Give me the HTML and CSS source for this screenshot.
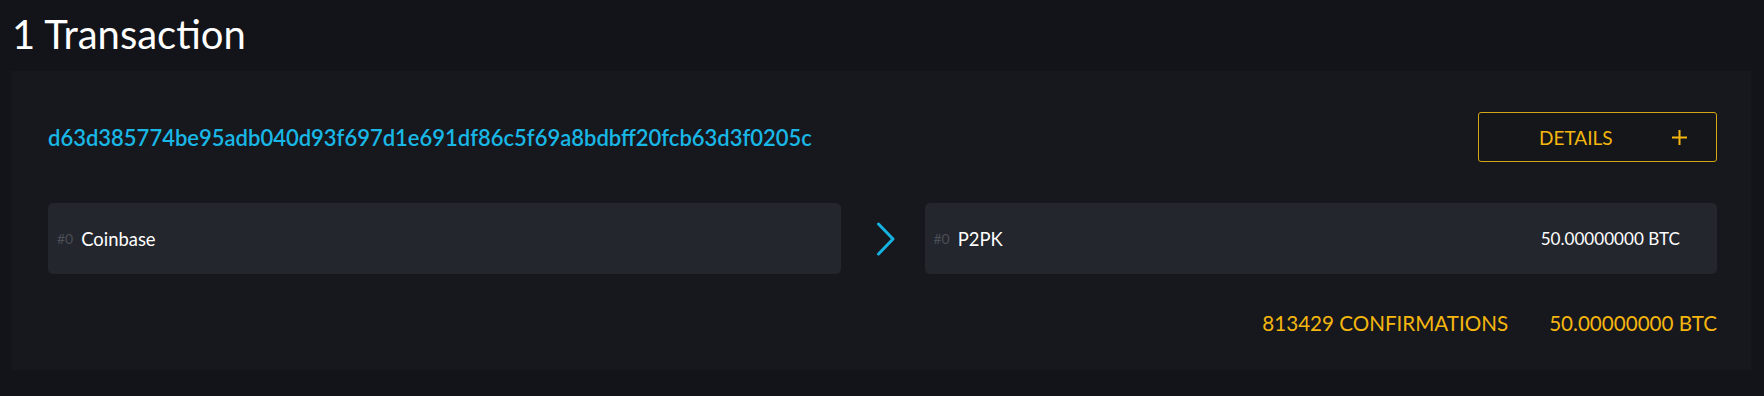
FILE: index.html
```html
<!DOCTYPE html>
<html lang="en">
<head>
<meta charset="utf-8">
<title>1 Transaction</title>
<link rel="stylesheet" href="styles.css">
</head>
<body>
<main class="page">
  <h1 class="title">1 Transaction</h1>
  <section class="card">
    <div class="tx-header">
      <a class="txid" href="#">d63d385774be95adb040d93f697d1e691df86c5f69a8bdbff20fcb63d3f0205c</a>
      <button class="details-btn" type="button">
        <span class="details-label">DETAILS</span>
        <svg class="plus" width="17" height="17" viewBox="0 0 17 17" aria-hidden="true"><path d="M8.5 1v15M1 8.5h15" stroke="#f5b60f" stroke-width="2" fill="none"/></svg>
      </button>
    </div>
    <div class="io-row">
      <div class="io-box">
        <span class="io-index">#0</span>
        <span class="io-label">Coinbase</span>
      </div>
      <div class="io-arrow">
        <svg width="20" height="34" viewBox="0 0 20 34" aria-hidden="true"><path d="M2.5 2 L17 17 L2.5 32" stroke="#16b3e2" stroke-width="3" stroke-linecap="round" stroke-linejoin="round" fill="none"/></svg>
      </div>
      <div class="io-box">
        <span class="io-index">#0</span>
        <span class="io-label">P2PK</span>
        <span class="io-amount">50.00000000 BTC</span>
      </div>
    </div>
    <div class="tx-footer">
      <span class="confirmations">813429 CONFIRMATIONS</span>
      <span class="total">50.00000000 BTC</span>
    </div>
  </section>
</main>
</body>
</html>
```

FILE: styles.css
```css
html, body {
  margin: 0;
  padding: 0;
  background: #121419;
}

body {
  font-family: Lato, "Noto Sans", sans-serif;
  color: #ffffff;
}

.page {
  padding: 10px 13px 0 11px;
}

.title {
  margin: 0 0 13px 1px;
  font-size: 40px;
  font-weight: 400;
  line-height: 48px;
  color: #ffffff;
}

.card {
  background: #16181d;
  height: 299px;
  box-sizing: border-box;
  padding: 41px 34px 0 37px;
}

.tx-header {
  display: flex;
  align-items: center;
  justify-content: space-between;
  height: 50px;
}

.txid {
  font-size: 22px;
  font-weight: 600;
  color: #19b7e6;
  text-decoration: none;
}

.details-btn {
  display: flex;
  align-items: center;
  height: 50px;
  width: 239px;
  box-sizing: border-box;
  padding: 0 28px 0 60px;
  background: #141619;
  border: 1px solid #d6a615;
  border-radius: 3px;
  font-family: inherit;
  cursor: pointer;
}

.details-label {
  font-size: 19px;
  color: #f5b60f;
}

.plus {
  margin-left: auto;
}

.io-row {
  display: grid;
  grid-template-columns: 1fr 84px 1fr;
  margin-top: 41px;
  height: 71px;
}

.io-box {
  display: flex;
  align-items: center;
  background: #23262d;
  border-radius: 5px;
  padding: 0 37px 0 9px;
}

.io-index {
  font-size: 14px;
  color: #4a4e57;
  margin-right: 8px;
}

.io-label {
  font-size: 18.4px;
  color: #ffffff;
}

.io-amount {
  margin-left: auto;
  font-size: 17.1px;
  color: #ffffff;
}

.io-arrow {
  display: flex;
  align-items: center;
  justify-content: center;
  padding-left: 6px;
}

.tx-footer {
  display: flex;
  justify-content: flex-end;
  gap: 41px;
  margin-top: 37px;
  font-size: 20.6px;
  line-height: 24px;
  color: #f5b60f;
}
```
